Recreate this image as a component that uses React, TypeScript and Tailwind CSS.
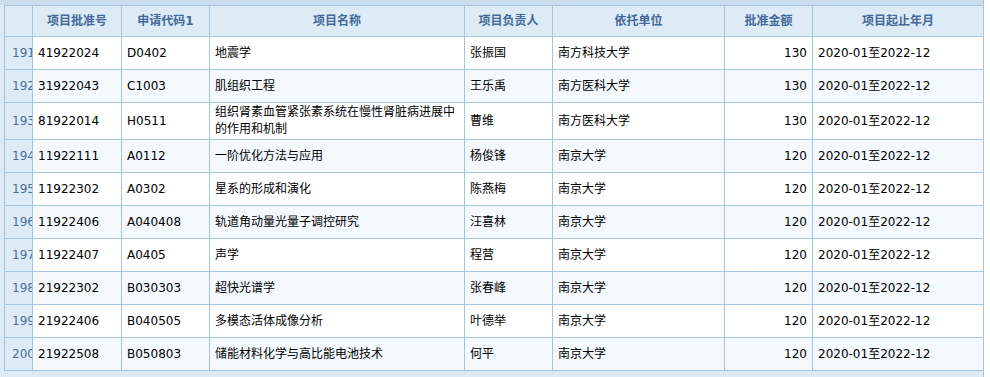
const COLS = [28, 89, 88, 255, 88, 172, 88, 171]

const HEADERS = ['', '项目批准号', '申请代码1', '项目名称', '项目负责人', '依托单位', '批准金额', '项目起止年月']

const ROWS = [
  ['191', '41922024', 'D0402', '地震学', '张振国', '南方科技大学', '130'],
  ['192', '31922043', 'C1003', '肌组织工程', '王乐禹', '南方医科大学', '130'],
  ['193', '81922014', 'H0511', '组织肾素血管紧张素系统在慢性肾脏病进展中的作用和机制', '曹维', '南方医科大学', '130'],
  ['194', '11922111', 'A0112', '一阶优化方法与应用', '杨俊锋', '南京大学', '120'],
  ['195', '11922302', 'A0302', '星系的形成和演化', '陈燕梅', '南京大学', '120'],
  ['196', '11922406', 'A040408', '轨道角动量光量子调控研究', '汪喜林', '南京大学', '120'],
  ['197', '11922407', 'A0405', '声学', '程营', '南京大学', '120'],
  ['198', '21922302', 'B030303', '超快光谱学', '张春峰', '南京大学', '120'],
  ['199', '21922406', 'B040505', '多模态活体成像分析', '叶德举', '南京大学', '120'],
  ['200', '21922508', 'B050803', '储能材料化学与高比能电池技术', '何平', '南京大学', '120'],
]

export default function App() {
  return (
    <div
      className="w-[984px] h-[377px] bg-[#dcebf6] border-r border-[#a4c5e0] overflow-hidden text-[12px] text-black"
      style={{ fontFamily: '"DejaVu Sans", "Noto Sans CJK SC", sans-serif' }}
    >
      <div className="h-[5px] bg-[#c9ddef]" />
      <div className="pl-[4px]">
        <table className="table-fixed border-collapse w-[979px]">
          <colgroup>
            {COLS.map((w, i) => (
              <col key={i} style={{ width: w }} />
            ))}
          </colgroup>
          <thead>
            <tr className="h-[31px] bg-[#dcebf6]">
              {HEADERS.map((h, i) => (
                <th
                  key={i}
                  className="border border-[#a4c5e0] px-[5px] py-0 font-bold text-center text-[#44699a] whitespace-nowrap"
                >
                  {h}
                </th>
              ))}
            </tr>
          </thead>
          <tbody>
            {ROWS.map((r, i) => (
              <tr
                key={r[0]}
                className={`${i === 2 ? 'h-[37px]' : 'h-[33px]'} ${i % 2 === 1 ? 'bg-[#f4f9fe]' : 'bg-white'}`}
              >
                <td className="border border-[#a4c5e0] bg-[#dcebf6] p-0 pl-[7px] text-[#4a6d9c] overflow-hidden whitespace-nowrap">
                  {r[0]}
                </td>
                <td className="border border-[#a4c5e0] px-[5px] py-0 whitespace-nowrap">{r[1]}</td>
                <td className="border border-[#a4c5e0] px-[5px] py-0 whitespace-nowrap">{r[2]}</td>
                <td className="border border-[#a4c5e0] px-[5px] py-[1px] leading-[17px]">{r[3]}</td>
                <td className="border border-[#a4c5e0] px-[5px] py-0 whitespace-nowrap">{r[4]}</td>
                <td className="border border-[#a4c5e0] px-[5px] py-0 whitespace-nowrap">{r[5]}</td>
                <td className="border border-[#a4c5e0] px-[5px] py-0 text-right whitespace-nowrap">{r[6]}</td>
                <td className="border border-[#a4c5e0] px-[5px] py-0 whitespace-nowrap">2020-01至2022-12</td>
              </tr>
            ))}
          </tbody>
        </table>
      </div>
    </div>
  )
}
